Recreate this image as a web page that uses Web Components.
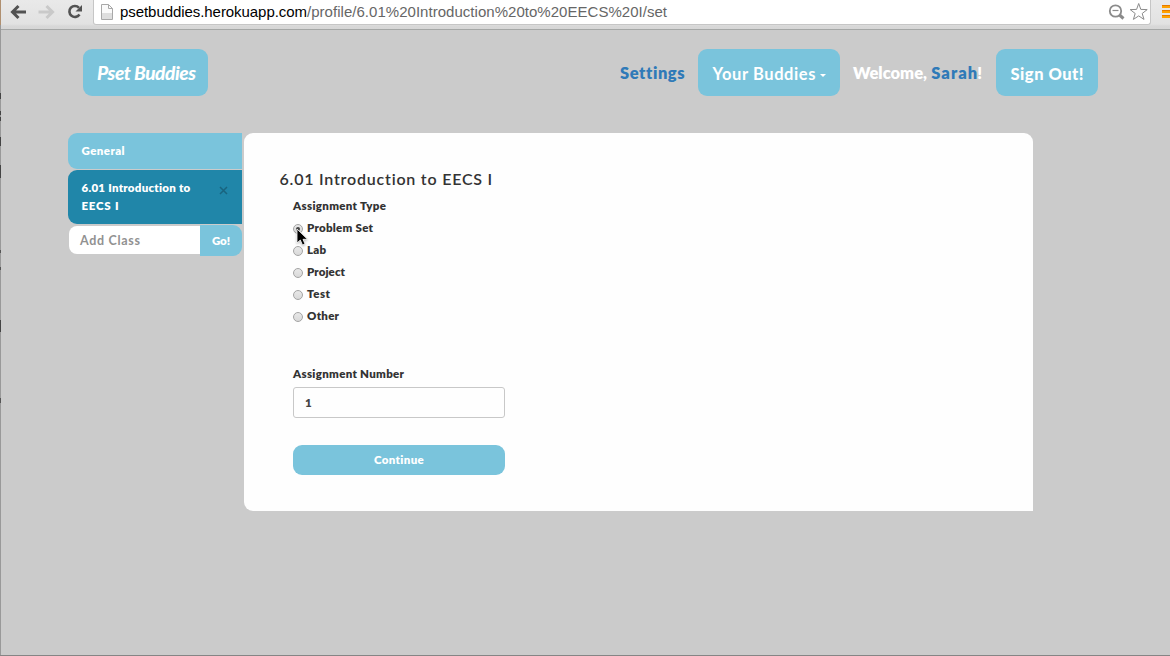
<!DOCTYPE html>
<html lang="en">
<head>
<meta charset="utf-8">
<title>Pset Buddies</title>
<style>
html,body{margin:0;height:100%;overflow:hidden}
body{background:#cbcbcb;font:800 11.5px/18px Lato,"Open Sans",sans-serif;color:#333}
</style>
</head>
<body>
<pset-app></pset-app>
<script>
function define(name, html, setup) {
  customElements.define(name, class extends HTMLElement {
    connectedCallback() {
      if (this.shadowRoot) return;
      this.attachShadow({mode:'open'}).innerHTML = html;
      if (setup) setup(this, this.shadowRoot);
    }
  });
}

/* Text tracked so that it fills the width given in its "w" attribute. */
define('fit-text', `<style>:host{display:inline-block;white-space:nowrap}span{display:inline-block}</style><span><slot></slot></span>`,
  (host, root) => {
    const w = +host.getAttribute('w'), span = root.querySelector('span');
    const n = host.textContent.length;
    host.style.width = w + 'px';
    span.style.letterSpacing = (w - span.getBoundingClientRect().width) / Math.max(1, n - 1) + 'px';
  });

define('browser-bar', `<style>
:host{display:flex;height:30px;box-sizing:border-box;background:linear-gradient(#e9e9e9,#e2e2e2 24px,#d8d8d8 26px,#d6d6d6);border-bottom:1px solid #a5a7a6;font:15px/24px "Liberation Sans",Arial,sans-serif}
.nav{width:92px;flex:none;display:flex}
.nav svg{display:block}
.box{width:1059px;height:25px;box-sizing:border-box;background:#fff;border:1px solid #c6c6c6;border-top:0;border-radius:0 0 3px 3px;display:flex}
.page{margin:4px 0 0 7px;width:12px;height:16px;flex:none}
.url{margin-left:7px;color:#666;white-space:nowrap;flex:1}
.url b{font-weight:400;color:#000}
.icons{width:42px;height:24px;flex:none}
.menu{margin-left:11px}
</style>
<div class="nav"><svg width="91" height="28" viewBox="1 0 91 28" fill="none">
<path d="M26 12H13M18.5 6L12.5 12L18.5 18" stroke="#525252" stroke-width="3"/>
<path d="M38.5 12H52M46.500 6L52.500 12L46.500 18" stroke="#c9c9c9" stroke-width="3"/>
<path d="M79 7.800A5.500 5.500 0 1 0 79.500 14.500" stroke="#525252" stroke-width="2.600"/><path d="M82 5V11.500H75.500Z" fill="#525252"/></svg></div>
<div class="box">
<svg class="page" viewBox="0 0 12 16"><path d="M.5.5H7.500L11.500 4.500V15.500H.5Z" fill="#fafafa" stroke="#a8a8a8"/><path d="M1 9H11V15H1Z" fill="#dedede"/><path d="M7.500.5V4.500H11.500" fill="none" stroke="#a8a8a8"/></svg>
<div class="url"><b><fit-text w="187">psetbuddies.herokuapp.com</fit-text></b><fit-text w="360">/profile/6.01%20Introduction%20to%20EECS%20I/set</fit-text></div>
<svg class="icons" viewBox="0 0 42 24" fill="none"><circle cx="7.500" cy="11" r="5.700" stroke="#8b8b8b" stroke-width="1.800"/><path d="M4.500 10.500H10.500" stroke="#8b8b8b" stroke-width="1.200"/><path d="M11.500 15L15.500 18.500" stroke="#8b8b8b" stroke-width="3"/><path d="M30.700 3.500L32.800 9.400L39.200 9.600L34.200 13.500L36 19.400L30.700 15.900L25.400 19.400L27.200 13.500L22.200 9.600L28.600 9.400Z" stroke="#8b8b8b"/></svg>
</div>
<svg class="menu" width="8" height="24"><path d="M0 5H8V8H0ZM0 10H8V13H0ZM0 15H8V18H0Z" fill="#ffa200"/><path d="M0 5.500H8M0 10.500H8M0 15.500H8" stroke="#e67a00"/></svg>`);

define('pill-button', `<style>:host{display:flex;align-items:center;justify-content:center;box-sizing:border-box;height:47px;border-radius:9px;background:#7ac4dc;color:#fff;flex:none}</style><slot></slot>`);

define('site-nav', `<style>
:host{display:flex;padding:19px 72px 0 82px;height:103px;box-sizing:border-box;color:#fff;font-size:16.500px;line-height:24px}
.logo{width:125px;font:italic 900 19px/24px Lato,cursive;padding:0 0 0 2px}
.right{margin-left:auto;display:flex;align-items:flex-start}
.t{padding-top:12px}.blue{color:#2f7ab8}
.buds{width:142px;margin:0 13px 0 14px;padding-top:2px;font-weight:700}
.caret{border:3px solid transparent;border-top-color:#fff;border-bottom:0;margin:4px 0 0 4px}
.out{width:102px;margin-left:14px;padding-top:2px;font-weight:900}
.w{width:129px;display:flex;justify-content:space-between}
</style>
<pill-button class="logo"><fit-text w="99">Pset Buddies</fit-text></pill-button>
<div class="right"><div class="t blue"><fit-text w="64">Settings</fit-text></div>
<pill-button class="buds"><fit-text w="103">Your Buddies</fit-text><span class="caret"></span></pill-button>
<div class="t w"><fit-text w="74">Welcome,</fit-text><span><fit-text class="blue" w="46">Sarah</fit-text>!</span></div>
<pill-button class="out"><fit-text w="73">Sign Out!</fit-text></pill-button></div>`);

define('class-list', `<style>
:host{display:block;width:174px;color:#fff}
.tab{box-sizing:border-box;padding:9px 14px 9px 13.500px;background:#7ac4dc;border-radius:9px 0 0 9px;height:36px;margin-bottom:1px}
.on{background:#2086a9;height:54px;display:flex;justify-content:space-between;margin-bottom:1px}
.on fit-text{display:block}
.x{margin:7px 0 0}
.add{display:flex;align-items:flex-start}
.in{margin:1px 0 0 1px;width:131px;height:28px;box-sizing:border-box;border-radius:8px 0 0 8px;background:#fff;color:#919191;padding:0 11px;font-size:12.500px;font-weight:700;line-height:29px}
.go{width:42px;height:31px;border-radius:0 9px 9px 0}
</style>
<div class="tab"><fit-text w="43">General</fit-text></div>
<div class="tab on"><div><fit-text w="109">6.01 Introduction to</fit-text><fit-text w="37">EECS I</fit-text></div><svg class="x" width="9" height="9"><path d="M1 1L8 8M8 1L1 8" stroke="#19647f" stroke-width="1.500"/></svg></div>
<div class="add"><div class="in"><fit-text w="60">Add Class</fit-text></div><pill-button class="go"><fit-text w="18">Go!</fit-text></pill-button></div>`);

define('radio-row', `<style>
:host{display:flex;height:22px;align-items:center}
i{width:10px;height:10px;box-sizing:border-box;border:1px solid #a4a4a4;border-radius:50%;background:linear-gradient(#e8e8e8,#d9d9d9);margin:2px 4px 0 0;display:grid;place-items:center}
:host([checked]) i::after{content:"";width:4px;height:4px;border-radius:50%;background:#444}
</style><i></i><slot></slot>`);

define('mouse-pointer', `<style>:host{display:block;width:13px;height:19px}svg{display:block;filter:drop-shadow(0 1px 1px #0004)}</style>
<svg width="13" height="19"><path d="M1 1V15L4.300 12L6.500 17L9 16L7 11.300H11.500Z" fill="#000" stroke="#fff" stroke-width=".8"/></svg>`);

define('assignment-form', `<style>
:host{display:block;position:relative;box-sizing:border-box;width:789px;height:378px;background:#fefefe;border-radius:9px 9px 0 9px;padding:34px 36px}
h1{margin:0 0 0 -.5px;font:600 16px/24px Lato,sans-serif}
.f{padding-left:13px;width:212px}
.l{height:18px;margin:6px 0 2px}
.n{margin-top:38px;height:18px}
.in{box-sizing:border-box;height:31px;border:1px solid #c8c8c8;border-radius:3px;margin-top:4px;padding:0 11px;line-height:30px;color:#444}
.go{height:30px;margin-top:27px}
mouse-pointer{position:absolute;left:52px;top:95px}
</style>
<h1><fit-text w="213">6.01 Introduction to EECS I</fit-text></h1>
<div class="f"><div class="l"><fit-text w="93">Assignment Type</fit-text></div>
<radio-row checked><fit-text w="66">Problem Set</fit-text></radio-row>
<radio-row><fit-text w="19">Lab</fit-text></radio-row>
<radio-row><fit-text w="38">Project</fit-text></radio-row>
<radio-row><fit-text w="23">Test</fit-text></radio-row>
<radio-row><fit-text w="32">Other</fit-text></radio-row>
<div class="n"><fit-text w="111">Assignment Number</fit-text></div>
<div class="in">1</div>
<pill-button class="go"><fit-text w="50">Continue</fit-text></pill-button></div>
<mouse-pointer></mouse-pointer>`);

define('pset-app', `<style>
:host{display:flex;height:656px;box-sizing:border-box;border-bottom:1px solid #858585}
.edge{width:1px;flex:none;background:linear-gradient(#b09070 0 25px,#999 25px 93px,#444 93px 99px,#999 99px 111px,#444 111px 115px,#999 115px 117px,#444 117px 121px,#999 121px 137px,#444 137px 146px,#999 146px 165px,#444 165px 178px,#999 178px 250px,#555 250px 253px,#999 253px 267px,#555 267px 270px,#999 270px 320px,#444 320px 332px,#999 332px 398px,#555 398px 403px,#999 403px)}
main{flex:1;min-width:0}
.c{display:flex;gap:2px;padding-left:67px;align-items:flex-start}
</style><div class="edge"></div><main><browser-bar></browser-bar><site-nav></site-nav><div class="c"><class-list></class-list><assignment-form></assignment-form></div></main>`);
</script>
</body>
</html>
